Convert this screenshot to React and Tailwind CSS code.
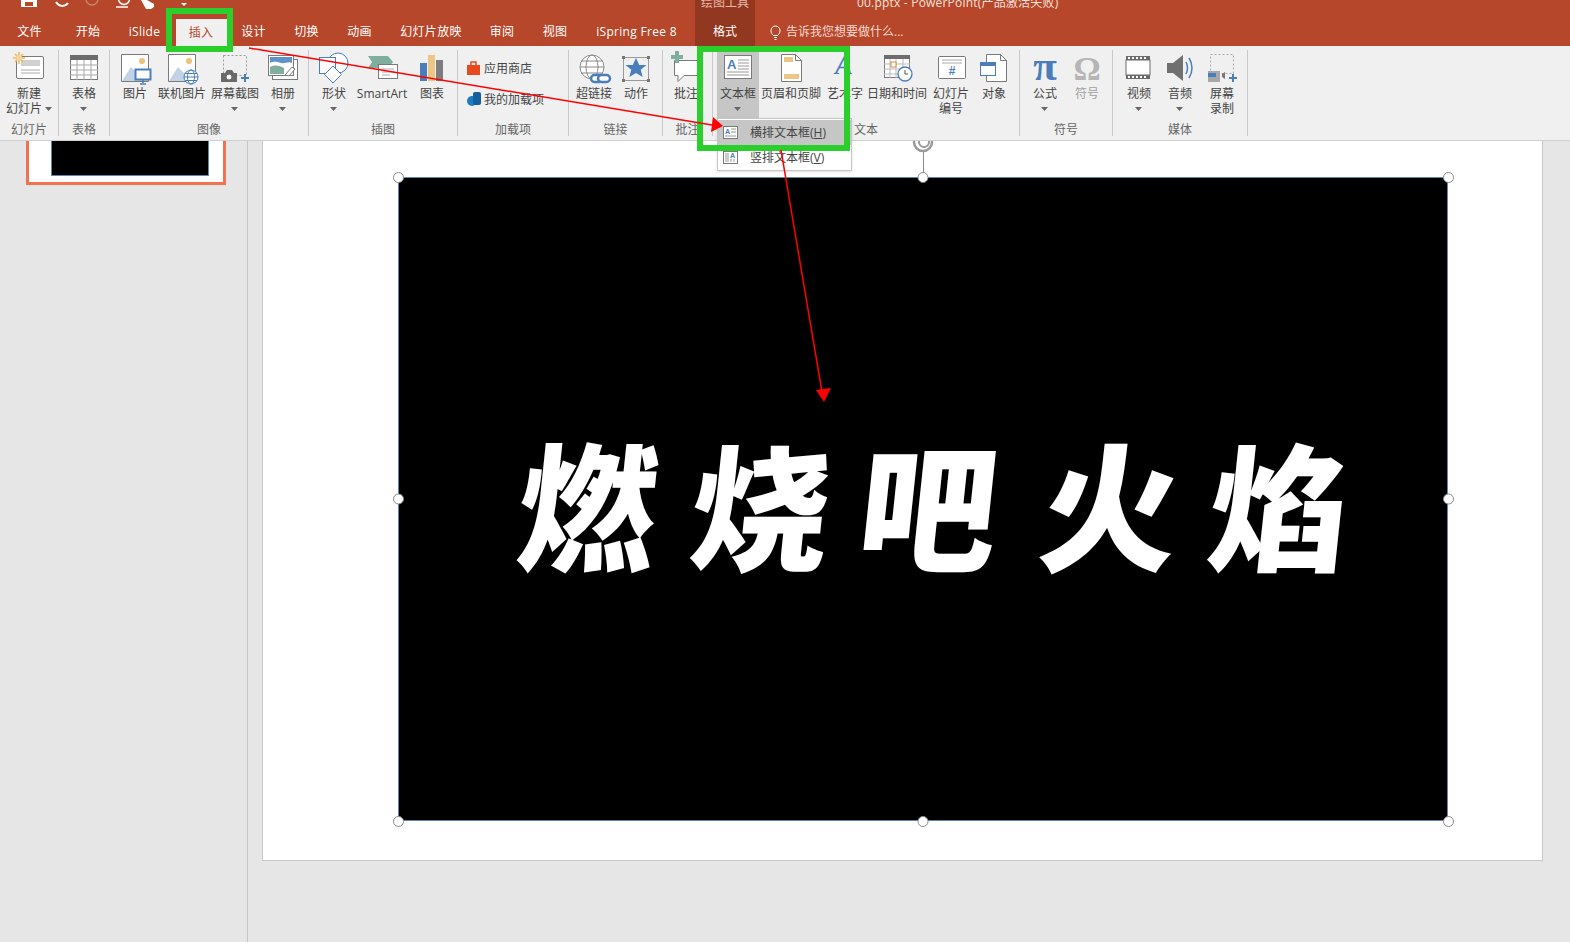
import React from "react";

const BLUE = "#4a7eba";
const GRAY = "#7a7a7a";

const Svg = ({ children }) => (
  <svg width="36" height="36" viewBox="0 0 36 36" fill="none">
    {children}
  </svg>
);

const Caret = ({ className = "" }) => (
  <svg width="7" height="4" viewBox="0 0 7 4" className={className}>
    <path d="M0 0h7L3.5 4z" fill="#666" />
  </svg>
);

const Photo = ({ x = 4 }) => (
  <>
    <path d={`M${x + 0.5} 4.5h27v27h-27z`} fill="#fff" stroke={GRAY} />
    <circle cx={x + 21} cy="11" r="3" fill="#efc07a" />
    <path d={`M${x + 1} 31l9-14 6 6 3-2 8 10z`} fill="#c2d3e8" />
  </>
);

const Globe = ({ cx, cy, r, color }) => (
  <g stroke={color} strokeWidth="1" fill="#fff">
    <circle cx={cx} cy={cy} r={r} />
    <ellipse cx={cx} cy={cy} rx={r / 2} ry={r} fill="none" />
    <path d={`M${cx - r} ${cy}h${r * 2}M${cx - r + 1} ${cy - r / 2}h${r * 2 - 2}M${cx - r + 1} ${cy + r / 2}h${r * 2 - 2}`} />
  </g>
);

const Plus = ({ x, y, color = BLUE, s = 4, t = 2 }) => (
  <path d={`M${x - s} ${y}h${s * 2}M${x} ${y - s}v${s * 2}`} stroke={color} strokeWidth={t} />
);

const icons = {
  newSlide: (
    <Svg>
      <rect x="5.5" y="6.5" width="27" height="22" rx="1.5" fill="#fff" stroke={GRAY} />
      <rect x="10" y="10" width="19" height="6" fill="#d0d0d0" />
      <path d="M10 20h19M10 23h19" stroke="#aaa" />
      <g stroke="#f0b860" strokeWidth="1.6">
        <path d="M8 2v12M2 8h12M4 4l8 8M12 4l-8 8" />
      </g>
      <circle cx="8" cy="8" r="3" fill="#f5d49a" />
    </Svg>
  ),
  table: (
    <Svg>
      <rect x="4.5" y="5.5" width="27" height="24" fill="#fff" stroke={GRAY} />
      <rect x="4" y="5" width="28" height="5" fill="#6d6d6d" />
      <path d="M4 15h28M4 20h28M4 25h28M11 10v20M18 10v20M25 10v20" stroke="#a8a8a8" />
    </Svg>
  ),
  picture: (
    <Svg>
      <Photo />
      <rect x="18.5" y="19.5" width="15" height="10" fill="#fff" stroke={BLUE} strokeWidth="2" />
      <path d="M26 30v3M23 34h6" stroke={BLUE} strokeWidth="1.5" />
    </Svg>
  ),
  online: (
    <Svg>
      <Photo />
      <Globe cx={27} cy={27} r={7} color={BLUE} />
    </Svg>
  ),
  screenshot: (
    <Svg>
      <rect x="6.5" y="5.5" width="23" height="20" stroke="#9a9a9a" strokeDasharray="2 2" />
      <path d="M4 23h4l2-3h5l2 3h3v9H4z" fill="#6a6a6a" />
      <circle cx="12" cy="27" r="3" fill="#fff" stroke="#6a6a6a" />
      <Plus x={28} y={28} />
    </Svg>
  ),
  album: (
    <Svg>
      <rect x="7.5" y="9.5" width="25" height="20" fill="#fff" stroke={GRAY} />
      <rect x="3.5" y="5.5" width="25" height="20" fill="#fff" stroke={GRAY} />
      <path d="M5 7h22v6c-4-2-7 1-11 0s-7-2-11 0z" fill="#5d93c9" />
      <path d="M5 17c6-3 10-1 14 1v6H5z" fill="#7fae9e" />
      <path d="M20 25l7-8 3 2-6 7z" fill="#fff" stroke={GRAY} />
    </Svg>
  ),
  shapes: (
    <Svg>
      <circle cx="22" cy="13" r="10" fill="#fff" stroke={BLUE} />
      <rect x="3.5" y="7.5" width="16" height="16" fill="#fff" stroke={BLUE} />
      <path d="M17 16l8.500 8.500L17 33l-8.500-8.500z" fill="#fff" stroke={BLUE} />
    </Svg>
  ),
  smartart: (
    <Svg>
      <path d="M4 6h20l5 6-5 6H4l4-6z" fill="#7fae9e" />
      <rect x="14.500" y="14.500" width="19" height="14" fill="#fff" stroke={GRAY} />
      <path d="M18 19h12M18 22h12M18 25h8" stroke="#aaa" />
    </Svg>
  ),
  chart: (
    <Svg>
      <rect x="6" y="13" width="7" height="18" fill={BLUE} />
      <rect x="14" y="5" width="7" height="26" fill="#edc585" />
      <rect x="22" y="10" width="7" height="21" fill="#7d7d7d" />
    </Svg>
  ),
  link: (
    <Svg>
      <Globe cx={16} cy={17} r={12} color="#8a8a8a" />
      <g stroke={BLUE} strokeWidth="2.500" fill="#fff">
        <rect x="15" y="25" width="12" height="7" rx="3.500" />
        <rect x="22" y="25" width="12" height="7" rx="3.500" />
      </g>
    </Svg>
  ),
  action: (
    <Svg>
      <rect x="5.500" y="7.500" width="25" height="23" stroke="#9a9a9a" />
      <path d="M4 6h3v3H4zM29 6h3v3h-3zM4 29h3v3H4zM29 29h3v3h-3z" fill="#777" />
      <path d="M18 8l3.200 7h7.300l-5.800 4.800 2 7.200-6.700-4-6.700 4 2-7.200L7.500 15h7.300z" fill={BLUE} />
    </Svg>
  ),
  comment: (
    <Svg>
      <path d="M6.500 10.500h26v15H16l-6 6v-6H6.500z" fill="#fff" stroke={GRAY} />
      <Plus x={9} y={7} color="#7fae9e" s={6} t={4} />
    </Svg>
  ),
  textbox: (
    <Svg>
      <rect x="4.500" y="5.500" width="27" height="23" fill="#fff" stroke={GRAY} />
      <text x="7" y="19" fontSize="13" fontWeight="700" fill={BLUE} fontFamily="Liberation Sans">A</text>
      <path d="M18 10h11M18 13h11M18 16h11M18 19h11M7 22h22M7 25h22" stroke="#999" />
    </Svg>
  ),
  header: (
    <Svg>
      <path d="M8.500 4.500h14l6 6v21h-20z" fill="#fff" stroke={GRAY} />
      <path d="M22.500 4.500v6h6" stroke={GRAY} />
      <rect x="11" y="7" width="9" height="5" fill="#edc585" />
      <rect x="11" y="24" width="15" height="5" fill="#edc585" />
    </Svg>
  ),
  wordart: (
    <Svg>
      <text x="8" y="24" fontSize="27" fontWeight="700" fontStyle="italic" fill={BLUE} fontFamily="Liberation Serif">A</text>
    </Svg>
  ),
  date: (
    <Svg>
      <rect x="5.500" y="5.500" width="25" height="22" fill="#fff" stroke={GRAY} />
      <rect x="5" y="5" width="26" height="4" fill="#6d6d6d" />
      <path d="M5 14h26M5 19h26M5 24h26M11 9v19M17 9v19M24 9v19" stroke="#bbb" />
      <rect x="12" y="12" width="5" height="5" fill="#fff" stroke="#e08a3c" />
      <circle cx="26" cy="24" r="7" fill="#fff" stroke={BLUE} strokeWidth="1.300" />
      <path d="M26 20v4h3" stroke="#555" />
    </Svg>
  ),
  number: (
    <Svg>
      <rect x="5.500" y="6.500" width="27" height="22" rx="1" fill="#fff" stroke={GRAY} />
      <path d="M9 10h20M9 13h20" stroke="#aaa" />
      <text x="19" y="25" textAnchor="middle" fontSize="12" fontWeight="700" fill={BLUE} fontFamily="Liberation Sans">#</text>
    </Svg>
  ),
  object: (
    <Svg>
      <path d="M10.500 4.500h14l6 6v21h-20z" fill="#fff" stroke={GRAY} />
      <path d="M24.500 4.500v6h6" stroke={GRAY} />
      <rect x="4.500" y="12.500" width="15" height="13" fill="#fff" stroke={BLUE} />
      <rect x="4" y="12" width="16" height="4" fill={BLUE} />
    </Svg>
  ),
  pi: (
    <Svg>
      <text x="18" y="30" textAnchor="middle" fontSize="43" fontWeight="700" fill={BLUE} fontFamily="Liberation Serif">π</text>
    </Svg>
  ),
  omega: (
    <Svg>
      <text x="18" y="30" textAnchor="middle" fontSize="34" fontWeight="700" fill="#b5b5b5" fontFamily="Liberation Serif">Ω</text>
    </Svg>
  ),
  video: (
    <Svg>
      <rect x="5" y="6" width="24" height="23" fill="#6a6a6a" />
      <rect x="5" y="10" width="24" height="15" fill="#fff" stroke="#6a6a6a" />
      <path d="M7 8h20M7 27h20" stroke="#fff" strokeWidth="2" strokeDasharray="2 2" />
    </Svg>
  ),
  audio: (
    <Svg>
      <path d="M5 13h6l10-8v26l-10-8H5z" fill="#707070" />
      <path d="M24 12c2 4 2 8 0 12M27 8c4 6 4 14 0 20" stroke={BLUE} strokeWidth="1.500" />
    </Svg>
  ),
  record: (
    <Svg>
      <rect x="6.500" y="4.500" width="23" height="19" stroke="#aaa" strokeDasharray="2 2" />
      <rect x="4" y="21" width="12" height="11" fill="#a8a8a8" />
      <rect x="4" y="23" width="8" height="4" fill={BLUE} />
      <path d="M18 24l3-2v7l-3-2z" fill="#777" />
      <Plus x={29} y={28} />
    </Svg>
  ),
};

function RibbonButton({ w, lines, icon, caret, active, muted }) {
  return (
    <div className={`relative flex h-[68px] shrink-0 flex-col items-center ${active ? "bg-[#c6c6c6]" : ""}`} style={{ width: w }}>
      <div className="h-[36px] w-[36px] shrink-0">{icon}</div>
      <div className={`flex flex-col items-center whitespace-nowrap text-xs leading-[15px] ${muted ? "text-[#a0a0a0]" : "text-[#444]"}`}>
        {lines.map((line) => (
          <span key={line}>{line}</span>
        ))}
        {caret && <Caret className="mt-[6px]" />}
      </div>
    </div>
  );
}

function RibbonGroup({ w, label, pl = 0, children }) {
  return (
    <div className="flex h-[86px] shrink-0 flex-col border-r border-[#c9c9c9]" style={{ width: w }}>
      <div className="flex h-[73px] shrink-0 items-start" style={{ paddingLeft: pl }}>
        {children}
      </div>
      <div className="text-center text-xs leading-[13px] text-[#666]">{label}</div>
    </div>
  );
}

const tabs = [
  ["文件", 59],
  ["开始", 58],
  ["iSlide", 55],
  ["插入", 52],
  ["设计", 51],
  ["切换", 55],
  ["动画", 51],
  ["幻灯片放映", 92],
  ["审阅", 50],
  ["视图", 56],
  ["iSpring Free 8", 107],
];

const glyphs = [
  ["燃", "ml-0"],
  ["烧", "ml-[35px]"],
  ["吧", "ml-[30px]"],
  ["火", "ml-[43px]"],
  ["焰", "ml-[31px]"],
];

const Handle = ({ className }) => (
  <div className={`absolute h-[11px] w-[11px] rounded-full border-[1.5px] border-[#8a8a8a] bg-white ${className}`} />
);

export default function App() {
  return (
    <div className="relative h-screen w-full overflow-hidden bg-[#e6e6e6] font-['Open_Sans','Noto_Sans_CJK_SC',sans-serif]">
      {/* Title bar */}
      <div className="relative z-10 bg-[#b7472a] text-white">
        <div className="flex h-[18px] overflow-hidden">
          <div className="relative w-[695px] shrink-0">
            <svg width="200" height="18" viewBox="0 0 200 18" fill="none" className="absolute left-0 top-0">
              <path d="M21 0h16v7H21z" fill="#fff" />
              <rect x="25" y="2" width="8" height="4" fill="#b7472a" />
              <path d="M56 2c3 5 9 5 12 1" stroke="#fff" strokeWidth="2" />
              <circle cx="92" cy="-1" r="6" stroke="#c9836f" strokeWidth="1.500" />
              <circle cx="124" cy="-1" r="5.500" stroke="#fff" strokeWidth="1.500" />
              <path d="M116 7h12" stroke="#fff" strokeWidth="1.500" />
              <path d="M141 0h6l7 4v3l-3 2h-5z" fill="#fff" />
              <path d="M181 3h6l-3 3z" fill="#fff" />
            </svg>
          </div>
          <div className="w-[60px] shrink-0 bg-[#923720] text-center text-xs leading-[12px] text-[#eab9a8]">
            <div className="-mt-[3px]">绘图工具</div>
          </div>
          <div className="ml-[102px] -mt-[5px] whitespace-nowrap text-xs leading-[16px] tracking-[0.2px] text-[#f6e2dc]">00.pptx - PowerPoint(产品激活失败)</div>
        </div>
        <div className="flex h-[28px] items-stretch text-xs">
          {tabs.map(([name, w]) => (
            <div
              key={name}
              className={`relative flex shrink-0 items-center justify-center tracking-[0.3px] ${name === "插入" ? "ml-[4px] mt-[1px] bg-[#f0f0f0] pr-[2px] text-[#b7472a]" : ""}`}
              style={{ width: w }}
            >
              {name}
            </div>
          ))}
          <div className="ml-[5px] flex w-[60px] shrink-0 items-center justify-center bg-[#923720]">格式</div>
          <div className="ml-[15px] flex items-center gap-[5px] text-[#f3d9d0]">
            <svg width="11" height="15" viewBox="0 0 11 15" fill="none" stroke="#fff">
              <path d="M3.500 10.500C2 9 1 8 1 5.500a4.500 4.500 0 019 0C10 8 9 9 7.500 10.500zM4 12.500h3M4.500 14.500h2" />
            </svg>
            告诉我您想要做什么...
          </div>
        </div>
      </div>

      {/* Ribbon */}
      <div className="relative z-10 flex h-[95px] border-b border-[#d0d0d0] bg-[#f0f0f0] pt-1">
        <RibbonGroup w={59} label="幻灯片">
          <div className="flex h-[68px] w-[58px] flex-col items-center">
            <div className="h-[36px] w-[36px] shrink-0">{icons.newSlide}</div>
            <div className="flex flex-col items-center whitespace-nowrap text-xs leading-[15px] text-[#444]">
              <span>新建</span>
              <span className="flex items-center gap-[3px]">
                幻灯片
                <Caret />
              </span>
            </div>
          </div>
        </RibbonGroup>
        <RibbonGroup w={51} label="表格">
          <RibbonButton w={50} lines={["表格"]} icon={icons.table} caret />
        </RibbonGroup>
        <RibbonGroup w={199} label="图像" pl={3}>
          <RibbonButton w={44} lines={["图片"]} icon={icons.picture} />
          <RibbonButton w={50} lines={["联机图片"]} icon={icons.online} />
          <RibbonButton w={56} lines={["屏幕截图"]} icon={icons.screenshot} caret />
          <RibbonButton w={40} lines={["相册"]} icon={icons.album} caret />
        </RibbonGroup>
        <RibbonGroup w={149} label="插图" pl={3}>
          <RibbonButton w={44} lines={["形状"]} icon={icons.shapes} caret />
          <RibbonButton w={52} lines={["SmartArt"]} icon={icons.smartart} />
          <RibbonButton w={48} lines={["图表"]} icon={icons.chart} />
        </RibbonGroup>
        <RibbonGroup w={111} label="加载项" pl={8}>
          <div className="flex flex-col gap-[15px] pt-[10px] text-xs leading-[15px] text-[#444]">
            <div className="flex items-center gap-[2px]">
              <svg width="16" height="16" viewBox="0 0 16 16">
                <path d="M1 5h13v10H1z" fill="#e8491d" />
                <path d="M5 5V2h5v3" fill="none" stroke="#e8491d" strokeWidth="1.500" />
              </svg>
              应用商店
            </div>
            <div className="flex items-center gap-[2px]">
              <svg width="16" height="16" viewBox="0 0 16 16">
                <circle cx="6" cy="10" r="5" fill="#1f7ac4" />
                <rect x="7" y="1" width="8" height="13" rx="2" fill="#155f9e" />
              </svg>
              我的加载项
            </div>
          </div>
        </RibbonGroup>
        <RibbonGroup w={94} label="链接" pl={5}>
          <RibbonButton w={40} lines={["超链接"]} icon={icons.link} />
          <RibbonButton w={44} lines={["动作"]} icon={icons.action} />
        </RibbonGroup>
        <RibbonGroup w={50} label="批注">
          <RibbonButton w={46} lines={["批注"]} icon={icons.comment} />
        </RibbonGroup>
        <RibbonGroup w={307} label="文本" pl={4}>
          <RibbonButton w={42} lines={["文本框"]} icon={icons.textbox} caret active />
          <RibbonButton w={64} lines={["页眉和页脚"]} icon={icons.header} />
          <RibbonButton w={44} lines={["艺术字"]} icon={icons.wordart} />
          <RibbonButton w={60} lines={["日期和时间"]} icon={icons.date} />
          <RibbonButton w={48} lines={["幻灯片", "编号"]} icon={icons.number} />
          <RibbonButton w={38} lines={["对象"]} icon={icons.object} />
        </RibbonGroup>
        <RibbonGroup w={93} label="符号" pl={4}>
          <RibbonButton w={42} lines={["公式"]} icon={icons.pi} caret />
          <RibbonButton w={42} lines={["符号"]} icon={icons.omega} muted />
        </RibbonGroup>
        <RibbonGroup w={135} label="媒体" pl={5}>
          <RibbonButton w={42} lines={["视频"]} icon={icons.video} caret />
          <RibbonButton w={40} lines={["音频"]} icon={icons.audio} caret />
          <RibbonButton w={44} lines={["屏幕", "录制"]} icon={icons.record} />
        </RibbonGroup>
      </div>

      {/* Workspace */}
      <div className="flex">
        <div className="h-[801px] w-[248px] shrink-0 border-r border-[#c6c6c6]">
          <div className="ml-[26px] h-[44px] w-[200px] border-x-[3px] border-b-[3px] border-[#f2714f] bg-white pl-[22px] pr-[14px]">
            <div className="h-[35px] border-x border-b border-[#5b86b0] bg-black" />
          </div>
        </div>
        <div className="ml-[14px] h-[720px] w-[1281px] border-x border-b border-[#c8c8c8] bg-white pl-[135px] pt-[36px]">
          <div className="relative flex h-[644px] w-[1050px] items-center justify-center border border-[#5b86b0] bg-black pl-[21px] pt-[16px]">
            <div className="flex whitespace-nowrap text-[138px] font-black leading-none text-white -skew-x-6">
              {glyphs.map(([glyph, margin]) => (
                <span key={glyph} className={margin}>
                  {glyph}
                </span>
              ))}
            </div>
            <div className="absolute -top-[27px] left-1/2 h-[22px] w-px bg-[#8a8a8a]" />
            <svg width="26" height="22" viewBox="0 0 26 22" fill="none" className="absolute -top-[47px] left-[511px]">
              <circle cx="13" cy="11" r="9" stroke="#9a9a9a" strokeWidth="2.500" />
              <circle cx="14" cy="11" r="5" stroke="#9a9a9a" strokeWidth="2" />
            </svg>
            <Handle className="-left-[6px] -top-[6px]" />
            <Handle className="left-1/2 -top-[6px] -translate-x-1/2" />
            <Handle className="-right-[7px] -top-[6px]" />
            <Handle className="-left-[6px] top-1/2 -translate-y-1/2" />
            <Handle className="-right-[7px] top-1/2 -translate-y-1/2" />
            <Handle className="-bottom-[7px] -left-[6px]" />
            <Handle className="-bottom-[7px] left-1/2 -translate-x-1/2" />
            <Handle className="-bottom-[7px] -right-[7px]" />
          </div>
        </div>
      </div>

      {/* Text box dropdown */}
      <div className="absolute left-[717px] top-[118px] z-20 w-[135px] border border-[#c6c6c6] bg-white pt-[1px] text-xs text-[#444] shadow-sm">
        <div className="flex h-[25px] items-center bg-[#c6c6c6] pl-[5px]">
          <svg width="15" height="13" viewBox="0 0 15 13" fill="none">
            <rect x="0.500" y="0.500" width="14" height="12" fill="#fff" stroke={GRAY} />
            <text x="2" y="8" fontSize="7" fontWeight="700" fill={BLUE} fontFamily="Liberation Sans">A</text>
            <path d="M8 3h5M8 6h5M2 10h11" stroke="#999" />
          </svg>
          <span className="ml-[12px]">
            横排文本框(<span className="underline">H</span>)
          </span>
        </div>
        <div className="flex h-[25px] items-center pl-[5px]">
          <svg width="15" height="15" viewBox="0 0 15 15" fill="none">
            <rect x="0.500" y="1.500" width="14" height="12" fill="#fff" stroke={GRAY} />
            <text x="7" y="8" fontSize="7" fontWeight="700" fill={BLUE} fontFamily="Liberation Sans">A</text>
            <path d="M3 3v9M5 3v9M8 9v3M11 9v3" stroke="#999" />
          </svg>
          <span className="ml-[12px]">
            竖排文本框(<span className="underline">V</span>)
          </span>
        </div>
      </div>

      {/* Annotations */}
      <div className="absolute left-[166px] top-[8px] z-30 h-[44px] w-[67px] border-[6px] border-[#2bcf2b]" />
      <div className="absolute left-[697px] top-[46px] z-30 h-[105px] w-[153px] border-[6px] border-[#2bcf2b]" />
      <svg width="1570" height="942" viewBox="0 0 1570 942" fill="none" className="pointer-events-none absolute left-0 top-0 z-40">
        <path d="M249 48L712 125" stroke="#f00" strokeWidth="1.500" />
        <path d="M723 126L713 117L711 132z" fill="#f00" />
        <path d="M781 150L822 392" stroke="#f00" strokeWidth="1.500" />
        <path d="M824 402L816 390L831 388z" fill="#f00" />
      </svg>
    </div>
  );
}
